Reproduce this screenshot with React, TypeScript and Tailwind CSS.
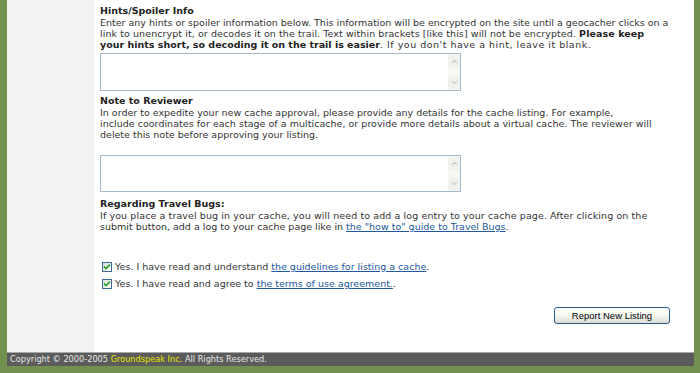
import { ChevronUp, ChevronDown } from "lucide-react"

function FakeTextArea({ className }: { className: string }) {
  return (
    <div className={`flex w-[361px] border border-[#a5b8cc] bg-white ${className}`}>
      <div className="flex-1" />
      <div className="flex w-[12px] flex-col justify-between bg-[#f7f7f4] py-[1px]">
        <div className="flex h-[13px] items-center justify-center rounded-[2px] bg-[#f1f2ee]">
          <ChevronUp className="h-[9px] w-[9px] text-[#c3c7cc]" strokeWidth={3} />
        </div>
        <div className="flex h-[13px] items-center justify-center rounded-[2px] bg-[#f1f2ee]">
          <ChevronDown className="h-[9px] w-[9px] text-[#c3c7cc]" strokeWidth={3} />
        </div>
      </div>
    </div>
  )
}

function Checked() {
  return (
    <div className="flex h-[10px] w-[10px] items-center justify-center border border-[#3b6a9a] bg-gradient-to-br from-[#dcdcd7] to-white">
      <svg width="8" height="8" viewBox="0 0 8 8">
        <path d="M1 3.5 L3 5.5 L7 1.5" fill="none" stroke="#21a121" strokeWidth="1.6" />
      </svg>
    </div>
  )
}

const link = "text-[#23589e] underline"

export default function App() {
  return (
    <div className="flex h-[373px] w-[700px] flex-col bg-[#72914f] font-['DejaVu_Sans',Verdana,sans-serif] text-[9.5px] leading-[11px] text-[#333]">
      <div className="mr-[6px] ml-[7px] flex flex-1 flex-col">
        <div className="flex flex-1">
          <div className="w-[87px] bg-[#f2f2f2]" />
          <div className="flex flex-1 flex-col bg-white pl-[6px] pr-[24px] pt-[5px] whitespace-nowrap">
            {/* Hints */}
            <div className="h-[12px] font-bold text-[#222]">Hints/Spoiler Info</div>
            <div>
              Enter any hints or spoiler information below. This information will be encrypted on the site until a geocacher clicks on a
            </div>
            <div className="tracking-[0.08px]">
              link to unencrypt it, or decodes it on the trail. Text within brackets [like this] will not be encrypted.{" "}
              <b className="text-[#222]">Please keep</b>
            </div>
            <div>
              <b className="text-[#222]">your hints short, so decoding it on the trail is easier</b>
              <span className="tracking-[0.5px]">. If you don't have a hint, leave it blank.</span>
            </div>
            <FakeTextArea className="mt-[3px] h-[38px]" />

            {/* Reviewer */}
            <div className="mt-[4px] h-[12px] font-bold text-[#222]">Note to Reviewer</div>
            <div>
              In order to expedite your new cache approval, please provide any details for the cache listing. For example,
            </div>
            <div className="tracking-[0.03px]">
              include coordinates for each stage of a multicache, or provide more details about a virtual cache. The reviewer will
            </div>
            <div>delete this note before approving your listing.</div>
            <FakeTextArea className="mt-[15px] h-[37px]" />

            {/* Travel bugs */}
            <div className="mt-[6px] h-[12px] font-bold text-[#222]">Regarding Travel Bugs:</div>
            <div className="tracking-[0.1px]">
              If you place a travel bug in your cache, you will need to add a log entry to your cache page. After clicking on the
            </div>
            <div>
              submit button, add a log to your cache page like in <a className={link}>the "how to" guide to Travel Bugs</a>.
            </div>

            <div className="mt-[26px] flex h-[17px] items-center gap-[3px] pl-[2px]">
              <Checked />
              <span>
                Yes. I have read and understand <a className={link}>the guidelines for listing a cache</a>.
              </span>
            </div>
            <div className="flex h-[17px] items-center gap-[3px] pl-[2px]">
              <Checked />
              <span>
                Yes. I have read and agree to <a className={link}>the terms of use agreement.</a>.
              </span>
            </div>

            <div className="mt-[15px] flex justify-end">
              <button className="h-[17px] w-[116px] rounded-[3px] border border-[#2a5a8c] bg-gradient-to-b from-white via-[#f6f6f3] to-[#dcdcd6] font-['Liberation_Sans',Arial,sans-serif] text-[9.5px] leading-[15px] text-black">
                Report New Listing
              </button>
            </div>
          </div>
        </div>
        <div className="flex h-[14px] items-center whitespace-pre border-t border-[#a8a8a8] bg-[#5b5b5b] pl-[3px] text-[8.2px] text-[#e8e8e8]">
          Copyright © 2000-2005 <span className="text-[#e6e600]">Groundspeak Inc.</span> All Rights Reserved.
        </div>
      </div>
      <div className="h-[7px]" />
    </div>
  )
}
